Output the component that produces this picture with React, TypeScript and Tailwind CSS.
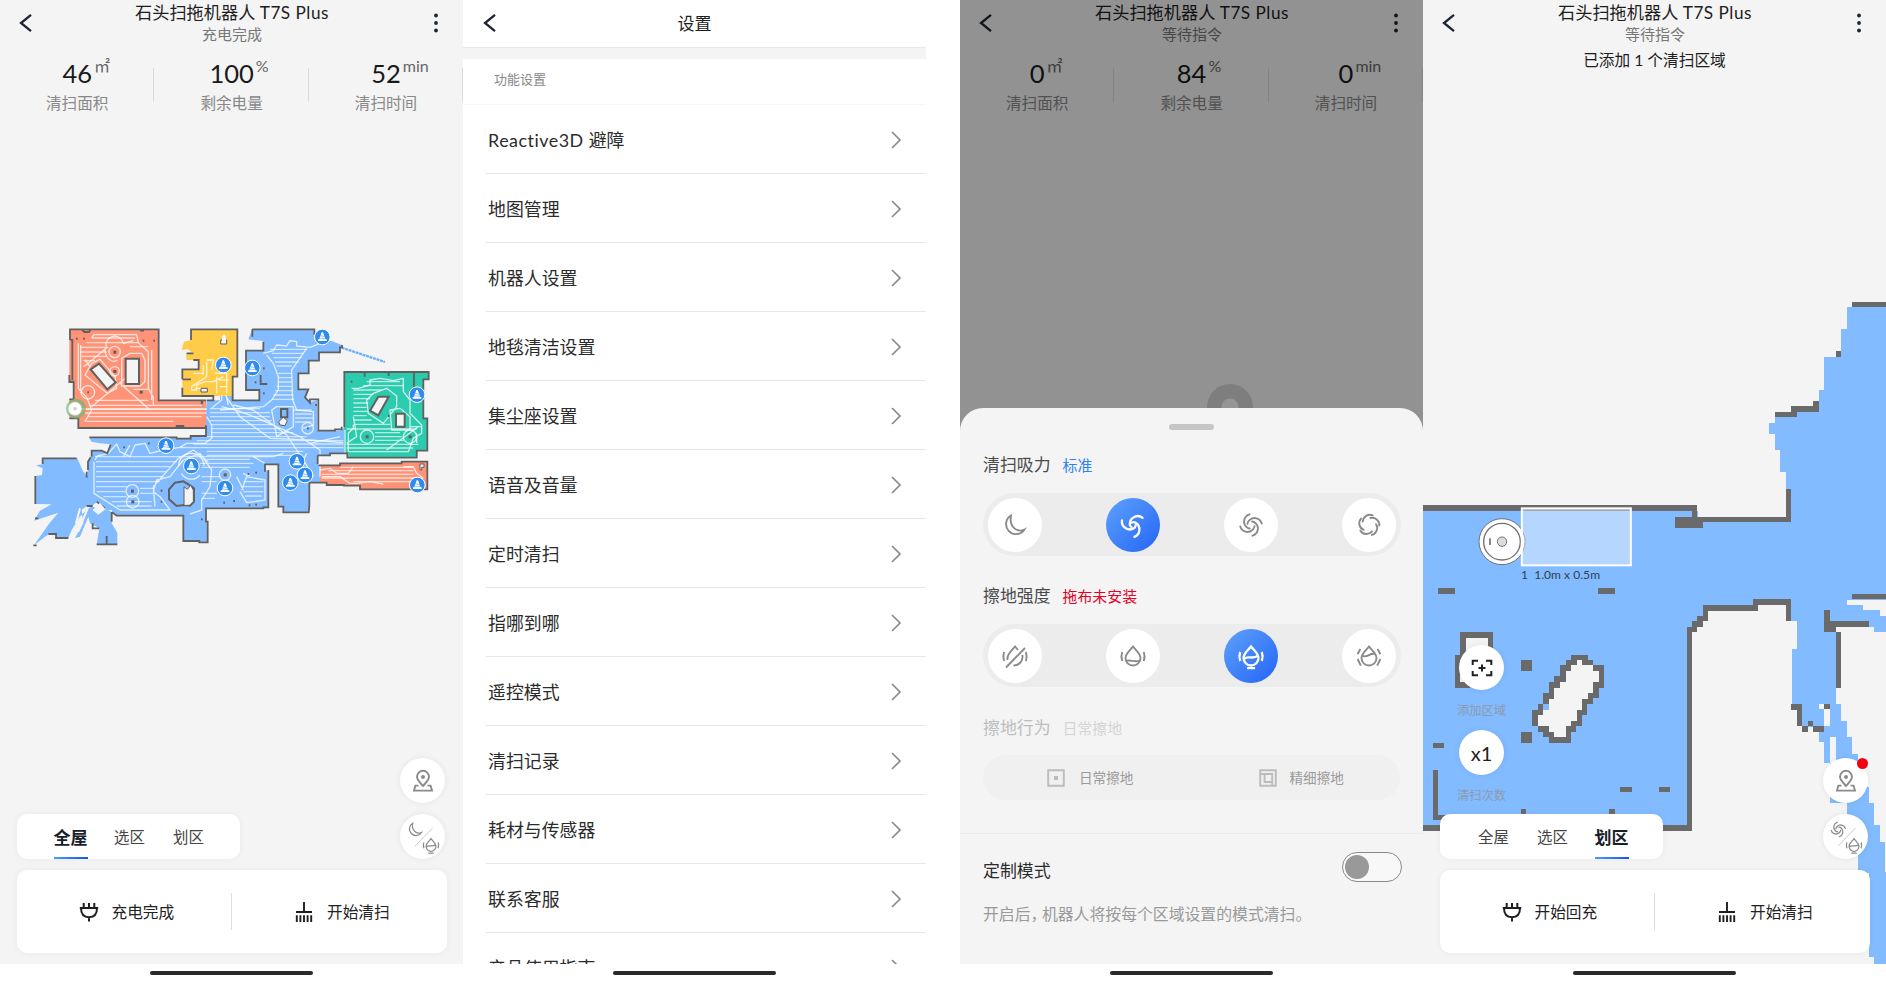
import React from 'react';

const CJK = "font-['Lato','Noto_Sans_CJK_SC',sans-serif]";

/* ---------- icons ---------- */

const DROP = 'M0 -9.5C3 -5.5 7.5 -2.5 7.5 2A7.5 7.5 0 0 1 -7.5 2C-7.5 -2.5 -3 -5.5 0 -9.5Z';
const MOON = 'M-4 -9.5A10 10 0 1 0 9.5 4.5C2 8 -6 2 -4 -9.5Z';
const ARMS: Record<number, string> = {
  3: 'M9.6 -7.2A8 8 0 0 0 -3.3 -1A3.4 3.4 0 0 0 -1.6 2',
  4: 'M10.7 -1.5A7.4 7.4 0 0 0 -1.8 -4.6Q-3.4 -3 -3.5 -1.2',
  5: 'M10.3 0.5A7.2 7.2 0 0 0 1.4 -7',
};

function Icon({ size = 24, children, className = '' }: { size?: number; children: React.ReactNode; className?: string }) {
  return (
    <svg width={size} height={size} viewBox={`${-size / 2} ${-size / 2} ${size} ${size}`} fill="none" stroke="currentColor" strokeWidth={1.9} className={`shrink-0 ${className}`}>
      {children}
    </svg>
  );
}

function Swirl({ arms }: { arms: number }) {
  return (
    <g strokeLinecap="round">
      {Array.from({ length: arms }, (_, i) => (
        <path key={i} d={ARMS[arms]} transform={`rotate(${(360 / arms) * i})`} />
      ))}
    </g>
  );
}

const SideMarks = () => <path d="M-10.8 -4Q-12.4 0.5 -10.8 5M10.8 -4Q12.4 0.5 10.8 5" />;

function DropMedium() {
  return (
    <g>
      <path d={DROP} />
      <path d="M-7 3C-3 -1 2 4 7 -0.5M-4 12.2H4" />
      <SideMarks />
    </g>
  );
}

const Back = () => (
  <Icon size={22} className="text-[#1c2530]">
    <path d="M5 -8.2L-5 0L5 8.2" strokeWidth={2.3} />
  </Icon>
);

const Pin = () => (
  <Icon size={24} className="text-[#8a8a8a]">
    <path d="M0 5C-3 1.5 -6 -1 -6 -4.2A6 6 0 0 1 6 -4.2C6 -1 3 1.5 0 5Z" />
    <circle r="2" cy="-4" fill="currentColor" stroke="none" />
    <path d="M-4.5 4.6H-7.6L-9 9.6H9L7.6 4.6H4.5" />
  </Icon>
);

const Plug = () => (
  <Icon size={22} className="text-[#1f1f1f]">
    <path d="M-9.2 -4H9.2M-8 -4C-8 2 -5 5.2 0 5.2C5 5.2 8 2 8 -4M-5.3 -9V-4M0 -9V-4M5.3 -9V-4M0 5.2V9.5" strokeWidth={2} />
  </Icon>
);

const Broom = () => (
  <Icon size={22} className="text-[#1f1f1f]">
    <path d="M0 -10V-0.5M-8 0H8M-7.2 3.2V10M-3.6 3.2V10M0 3.2V10M3.6 3.2V10M7.2 3.2V10" strokeWidth={1.9} />
  </Icon>
);

/* ---------- shared pieces ---------- */

function Header({ status }: { status: string }) {
  return (
    <header className="flex h-[46px] items-start justify-between pl-[15px] pr-[16px]">
      <div className="pt-[12px]"><Back /></div>
      <div className="pl-[2px] text-center">
        <h1 className="h-[24px] whitespace-nowrap text-[17.2px] leading-[26px] text-[#1d1d1d]">
          石头扫拖机器人 <span className="tracking-[0.5px]">T7S Plus</span>
        </h1>
        <p className="text-[15px] leading-[20px] text-[#777]">{status}</p>
      </div>
      <div className="pt-[12px]">
        <Icon size={22} className="text-[#1c2530]">
          <g fill="currentColor" stroke="none"><circle cy="-7.5" r="1.9" /><circle r="1.9" /><circle cy="7.5" r="1.9" /></g>
        </Icon>
      </div>
    </header>
  );
}

type StatT = { value: string; unit: string; label: string };

function Stats({ items }: { items: StatT[] }) {
  return (
    <div className="flex h-[70px] pt-[13px]">
      {items.map((s, i) => (
        <div key={s.label} className="relative flex w-[154.4px] shrink-0 flex-col items-center">
          <div className="relative h-[32px] text-[25.5px] leading-[28px] text-[#1a1a1a]">
            {s.value}
            <span className="absolute left-full top-[-3px] pl-[2px] text-[16px] leading-[20px] text-[#666]">{s.unit}</span>
          </div>
          <div className="text-[15.6px] leading-[24px] text-[#888]">{s.label}</div>
          {i < 3 && <i className="absolute right-0 top-[9px] h-[34px] w-px bg-black/10" />}
        </div>
      ))}
    </div>
  );
}

const HomeBar = () => (
  <div className="flex h-[18px] shrink-0 justify-center bg-white pt-[6.5px]">
    <i className="h-[4.5px] w-[163px] rounded-full bg-[#2a2a2a]" />
  </div>
);

function Tabs({ active }: { active: number }) {
  return (
    <nav className="flex h-[45px] w-[223px] rounded-[10px] bg-white pl-[24px] shadow-[0_0_6px_rgba(0,0,0,0.05)]">
      {['全屋', '选区', '划区'].map((t, i) => (
        <div key={t} className="relative flex w-[59px] items-center justify-center pt-[3px]">
          <span className={i === active ? 'text-[17px] font-bold text-[#17202b]' : 'text-[15.4px] text-[#444]'}>{t}</span>
          {i === active && <i className="absolute bottom-0 h-[2px] w-[34px] bg-gradient-to-r from-[#4d9bff] to-[#1554ee]" />}
        </div>
      ))}
    </nav>
  );
}

function Actions({ left }: { left: string }) {
  return (
    <div className="mt-[11px] flex h-[83px] w-[430px] items-center rounded-[10px] bg-white text-[15.7px] text-[#222] shadow-[0_0_6px_rgba(0,0,0,0.05)]">
      <div className="flex w-[214px] items-center gap-[12px] pl-[60.5px] pt-[2px]"><Plug /><span>{left}</span></div>
      <i className="h-[37px] w-px bg-[#ddd]" />
      <div className="flex items-center gap-[12px] pl-[61px] pt-[2px]"><Broom /><span>开始清扫</span></div>
    </div>
  );
}

const Fab = ({ children }: { children: React.ReactNode }) => (
  <div className="relative flex h-[45px] w-[45px] items-center justify-center rounded-full bg-white shadow-[0_0_6px_rgba(0,0,0,0.07)]">{children}</div>
);

function Fabs({ mode, alert }: { mode: React.ReactNode; alert?: boolean }) {
  return (
    <div className="flex flex-col gap-[11px] pr-[2px]">
      <Fab>
        <Pin />
        {alert && <i className="absolute right-[0px] top-0 h-[11px] w-[11px] rounded-full bg-[#f30014]" />}
      </Fab>
      <Fab>
        <Icon size={44} className="text-[#8a8a8a]">
          <g transform="translate(-7.7 -7.5) scale(.66)">{mode}</g>
          <path d="M-8 9L9.5 -9" stroke="#ccc" strokeWidth="1" />
          <g transform="translate(8 8) scale(.66)"><DropMedium /></g>
        </Icon>
      </Fab>
    </div>
  );
}

/* ---------- overview map ---------- */

const CONES: [number, number][] = [
  [610, 165], [438, 407], [514, 468], [615, 534], [697, 174], [907, 81], [1191, 254], [831, 454], [855, 495], [811, 518], [1192, 525],
];

const ORANGE_LINES: [number, number, number][] = [
  [215, 345, 84], [200, 355, 98], [182, 265, 112], [182, 260, 126], [185, 260, 139], [190, 225, 152], [225, 385, 271], [210, 545, 286],
  [195, 560, 298], [195, 560, 309], [205, 545, 320], [200, 460, 334], [330, 385, 110], [340, 385, 238],
];
const BLUE_LINES: [number, number, number][] = [
  [570, 720, 296], [570, 750, 308], [570, 750, 320], [570, 755, 332], [572, 760, 344], [574, 780, 356], [574, 820, 368], [540, 860, 380],
  [530, 970, 392], [520, 970, 402], [480, 970, 413], [560, 850, 424], [560, 830, 436], [225, 705, 440], [560, 690, 448], [228, 470, 455],
  [228, 450, 470], [228, 440, 485], [228, 430, 500], [228, 420, 515], [228, 320, 530], [230, 315, 545], [250, 320, 560], [275, 395, 575], [290, 395, 588],
  [360, 400, 535], [360, 400, 550], [540, 700, 460], [545, 690, 472], [545, 600, 500], [545, 590, 515], [545, 590, 550], [545, 585, 565],
  [750, 860, 118], [755, 850, 130], [760, 845, 143], [765, 835, 156], [770, 815, 168], [775, 815, 190], [775, 815, 203], [775, 815, 216], [770, 815, 229],
  [765, 818, 242], [760, 820, 255], [755, 822, 268], [820, 875, 300], [825, 875, 312], [825, 878, 324], [825, 875, 336], [670, 730, 515], [670, 730, 530], [670, 730, 545], [675, 725, 558],
];
const GREEN_LINES: [number, number, number][] = [
  [1040, 1140, 215], [1030, 1150, 227], [1000, 1085, 240], [1000, 1060, 253], [1000, 1050, 266], [1000, 1045, 279], [1000, 1040, 292], [1000, 1045, 304],
  [1000, 1040, 317], [1000, 1055, 330], [1000, 1110, 343], [980, 1190, 357], [1065, 1140, 368], [1065, 1145, 380], [1065, 1150, 391], [980, 1195, 403], [980, 1180, 414],
];
const RED_LINES: [number, number, number][] = [
  [960, 1180, 472], [925, 1180, 482], [905, 1180, 493], [905, 1190, 504], [1000, 1180, 515],
];

const rows = (list: [number, number, number][]) => list.map(([a, b, y]) => `M${a} ${y}H${b}`).join('');

function OverviewMap() {
  return (
    <svg width="420" height="250" viewBox="0 0 1260 750" className="ml-[20px] shrink-0" fill="none">
      <path fill="#82bbff" d="M558 300V378H512V384H470V383H208L214 395L240 400L272 403L265 430L245 422H215V440L205 455L202 500L188 482L172 445H68V463L48 466L68 475L66 495L46 498V582L95 583L60 602L42 632L115 608L88 640L42 706L75 680L88 672H108V684H145L155 660L178 622L200 600L232 575L255 595L275 606V640L292 668V703H230L238 655L210 640L205 620L180 680L165 684L190 640L185 600L200 588L275 600L290 617H490V695H563L558 595H745V485L735 480V462H775V590H790V607H868V518H900V466L893 462V436H930V430H975V350L960 362H891V271L872 276L855 262L865 240H835V190H866V152H897V127H960L966 105L935 93L883 88V58H697L685 88L730 93V122H678V240H718V271H638V256H600V271H560Z" />
      <path fill="#ff9377" d="M148 58H416V271H558V354H175V325H148V268H161V215H148Z" />
      <path fill="#ffcc4a" d="M513 58H652V200H638V258H487V210H513V206H487V178H536V150H500L498 130H520L503 118L485 120L492 95L513 90Z" />
      <path fill="#2bcbae" d="M973 186H1226V208H1210V325H1222V422H1192V443H985V430H973Z" />
      <path fill="#ff9377" d="M900 466L960 466V460H1145V455H1222V538H1020V525H920V518H900Z" />

      <g stroke="#f4f4f4" strokeWidth="6">
        <path d="M180 595L168 640M205 590L175 665M200 655L180 690" />
      </g>
      <path d="M965 113L1095 156" stroke="#6fb0fb" strokeWidth="7" strokeDasharray="9 2" />

      <g stroke="#fff" strokeOpacity=".68" strokeWidth="4.2">
        <path d={rows(ORANGE_LINES)} />
        <path d={rows(GREEN_LINES)} />
        <path d={rows(RED_LINES)} />
      </g>
      <path d={rows(BLUE_LINES)} stroke="#fff" strokeOpacity=".62" strokeWidth="4.2" />
      <g stroke="#fff" strokeOpacity=".75" strokeWidth="4" strokeLinejoin="round">
        <path d="M175 100V235L200 262L215 300L195 335M182 105V250M215 84L222 74H350L355 98L385 125V235L400 262V285M395 120V270M195 150L210 170M190 170L205 160L262 112M330 130H365L375 150V215L360 228H305V145ZM215 160L240 148L285 200L290 235L262 250L195 195ZM215 290L345 180M300 220L390 300M258 110A26 26 0 0 1 310 100L340 92M255 120C258 150 280 160 292 150M175 297H560" />
        <circle cx="284" cy="126" r="17" /><circle cx="204" cy="247" r="20" /><circle cx="284" cy="184" r="14" />
        <path d="M560 150H580L575 180M560 155V200L515 230V240H530V225L555 215H580L610 200M550 165V195M520 190H550M585 190H620V250M590 200V250M598 210H625M525 235H545M600 230H620M605 255V270L575 295M618 255L625 285" />
        <path d="M225 450L232 438L265 430L290 402L300 425L330 440L345 405L375 400L390 430L430 420L480 412L500 400H555L575 385V345L560 320M222 455V550L300 600H450L420 560L400 545L410 510L450 500L490 450L540 430L575 480L570 530L545 570V600L510 612M405 590L400 530L475 445L520 420L565 455M330 405L310 440M620 262L660 320L750 385L870 390L970 398M605 290C700 310 760 350 840 380L900 420V500M640 285L700 300L800 375L850 450L880 500M665 540L680 500L735 510V570L680 578L660 545M735 460L700 440H760L790 430M650 500L670 540" />
        <path d="M730 130L760 122L770 105L800 108L810 92L830 95V108L870 112L900 100L920 90M860 115L815 180L818 270L830 300L880 305V345L850 355M740 135L760 160L775 200V240L755 270L730 290L600 300M770 290H820V350L770 380L755 300Z" />
        <circle cx="337" cy="543" r="19" /><circle cx="338" cy="575" r="19" /><circle cx="615" cy="494" r="17" /><circle cx="863" cy="355" r="17" /><path d="M476 468A38 38 0 0 1 514 430A38 38 0 0 1 552 468M484 490A34 34 0 0 0 540 495M690 495A20 20 0 0 1 670 490" />
        <path d="M995 235H1015L1050 225V210L1080 205L1120 212L1150 205V245L1170 270V310L1190 330L1205 345V370L1180 385L1165 425H985V370L1000 355V345M1060 250L1100 235L1130 258V290L1090 340L1045 310L1040 270ZM1110 300L1140 295L1170 320V360H1115ZM1000 320L1010 380M1195 350L1100 420M1170 350H1205M1190 370V400M1010 380L980 400M975 360V430" />
        <circle cx="1041" cy="380" r="20" /><circle cx="1170" cy="380" r="20" />
        <path d="M900 480L930 475L950 490H985L1000 470M905 500H960L990 520H1010L1050 515L1090 522M1150 470H1180L1190 490L1210 505" />
        <path d="M840 470L860 430M870 400L960 380" />
      </g>

      <g stroke="#606060" strokeWidth="5.4">
        <path d="M161 268V215H148M150 90V58H416V271H545V282L548 271H558M152 90H157V210M148 268H161M148 325H175V354H558V346M185 58L193 66H207L213 58M363 58V62H372M470 354V348H490V354M148 195V216H158" />
        <path d="M208 382H470V386H512V378H558V350M513 90V58H652V200H638V271H718V240H678V122H730V95M638 240V271M487 233V258H580V271H560M487 208V178H536V150H520M487 208H513M500 130H520" />
        <path d="M697 58V80M697 58H883V75M966 105V112H960V127H897V152H866V190H835V238H865L855 262L870 278V268H895V362H945V358H965V350M893 436H930V430H982V443H1190V422H1222V325H1210V208H1226V186H973V352M1182 186V235M1034 186V200M1106 186V198" />
        <path d="M893 462V436M896 466H960V460H1145V455H1222V538H1020V527H972V525H920V518H868V588L866 607H790V590H775V463H735V485M745 480V592H730V595H558V635H563V697H538V693H490V617H290L275 606M275 606V635M230 703H292M260 703V678M238 655H218V640M200 588H218M230 575L255 595M68 462V445H170M46 498V582M85 672H108V684H145M45 625H55M40 706H50M215 440V422H245L262 430L272 404M212 442L204 455V480M200 485V503" />
        <path d="M722 195V222H742" />
      </g>
      <g fill="#f4f4f4" stroke="#606060" strokeWidth="6">
        <path d="M212 178L237 161L287 217L262 238Z" /><path d="M317 146H357V222H317Z" />
        <path d="M1075 260H1106L1075 316L1050 302Z" /><path d="M1128 311H1154V350H1128Z" />
        <path d="M783 297H802V322H783Z" fill="#82bbff" /><path d="M776 335L790 322L802 332L795 347L780 345Z" strokeWidth="3" />
        <path d="M492 585L470 588L447 568V538L465 518L490 514L510 526L522 535V575L510 587Z" fill="#82bbff" />
        <path d="M492 530L502 538L512 526L520 540V575L508 586H492Z" strokeWidth="3" />
        <path d="M602 90H620V102H602Z" strokeWidth="3" /><path d="M543 235H562V246H543Z" strokeWidth="3" />
        <path d="M1200 462H1212V472H1205V480H1200Z" strokeWidth="3" />
      </g>
      <path fill="#f4f4f4" d="M606 98V80L612 72L618 80V98ZM218 600L240 578L256 598L235 614Z" />
      <g fill="#6b5b58">
        {[[284, 126], [284, 184], [363, 246], [337, 543], [338, 575], [1041, 380], [1170, 380], [615, 494]].map(([x, y]) => (
          <rect key={`${x}-${y}`} x={x - 4} y={y - 4} width="9" height="9" />
        ))}
        {[[170, 86], [192, 86], [370, 92], [402, 92], [312, 412], [386, 400], [424, 542], [424, 575], [545, 628], [642, 573], [612, 578], [685, 492], [708, 488], [688, 586], [708, 584], [731, 175], [731, 250], [706, 217], [888, 285], [994, 215], [1106, 318], [863, 355], [204, 247]].map(([x, y]) => (
          <rect key={`${x}-${y}`} x={x - 2} y={y - 3} width="5" height="6" />
        ))}
      </g>
      <circle cx="168" cy="296" r="30" fill="#6cb878" fillOpacity=".65" />
      <circle cx="165" cy="296" r="20" fill="#fff" stroke="#d5d5d5" strokeWidth="2" />
      <circle cx="165" cy="296" r="5" fill="#ccc" />
      {CONES.map(([x, y]) => (
        <g key={`${x}-${y}`} transform={`translate(${x} ${y})`}>
          <circle r="23.5" fill="#2f8cee" stroke="#fff" strokeWidth="3" />
          <path fill="#fff" d="M-2 -14H2L10 8H-10ZM-13 7H13V12H-13Z" />
          <path d="M-6 -4L7 -1M-9 3L9 5" stroke="#2f8cee" strokeWidth="1.6" />
        </g>
      ))}
    </svg>
  );
}

/* ---------- zone map ---------- */

function ZoneMap() {
  return (
    <svg width="463" height="964" viewBox="9 -840 1389 2892" className="absolute left-0 top-0" preserveAspectRatio="none">
      <g shapeRendering="crispEdges">
        <path fill="#82bbff" d="M1398 80H1281V148H1264V231H1213V330H1197V396H1065V430H1047V462H1065V511H1081V577H1098V727H833V693H9V1640H800V1048H815V1024H833V1008H850V992H1015V968H1113V1023H1130V1108H1115V1273H1147V1350H1180V1355H1197V1387H1213V1450H1230V1570H1280V1670H1313V1780H1346V2032H1362V2052H1398V1775H1395V1686H1379V1636H1362V1570H1346V1520H1313V1423H1297V1372H1280V1323H1264V1273H1247V1040H1362V1057H1398Z" />
        <g transform="translate(0 840)">
          <path fill="#f4f4f4" d="M1281 119H1398V167H1379V151H1329V135H1281ZM1230 532H1247V610H1230ZM1213 447H1230V497H1213ZM1197 433H1213V447H1197ZM137 234H204V370H121V300H137ZM453 300H487V316H520V333H537V366H520V400H503V416H487V449H470V482H453V498H437V532H403V515H387V498H354V466H370V449H387V416H403V383H420V366H437V333H453ZM1147 500H1180V515H1147Z" />
          <g fill="#6a6a6a">
            <path d="M54 85H104V102H54ZM535 85H584V102H535ZM302 300H336V333H302ZM302 515H336V548H302ZM38 548H71V564H38ZM600 680H635V696H600ZM717 680H750V696H717ZM302 747H319V780H302ZM567 747H584V780H567ZM38 630H54V766H88V780H38Z" />
            <path d="M9 796H800V201H815V184H832V168H849V135H999V118H1114V184H1098V135H1015V152H865V184H849V201H832V217H816V812H9Z" />
            <path d="M1297 102H1398V118H1297ZM1213 151H1229V184H1346V201H1247V217H1213ZM1247 217H1263V383H1247ZM1114 433H1147V498H1131V449H1114ZM1213 433H1230V447H1213ZM1163 483H1180V498H1163ZM1147 498H1163V515H1147ZM1180 498H1213V515H1180Z" />
            <path d="M121 217H220V300H204V234H137V300H121V383H104V284H121ZM104 366H150V383H104Z" />
            <path fillRule="evenodd" d="M453 284H503V300H519V316H551V383H536V414H519V433H502V465H486V498H469V515H453V548H386V532H370V515H354V498H336V449H354V433H370V400H386V366H403V349H420V316H437V300H453ZM470 300V316H453V333H437V366H420V383H403V416H387V433H370V466H354V498H387V515H403V532H437V498H453V482H470V449H487V416H503V400H520V366H537V333H520V316H487V300Z" />
          </g>
        </g>
        <path fill="#6a6a6a" d="M9 676H832V710H1098V628H1114V727H849V744H766V710H816V693H9ZM1297 65H1398V82H1297ZM1247 214H1263V231H1247ZM1065 396H1114V379H1180V363H1196V396H1131V412H1065Z" />
      </g>
      <g fill="#fff" stroke="#6f7276">
        <circle cx="246" cy="785" r="69" strokeWidth="3" />
        <circle cx="246" cy="785" r="55" strokeWidth="4" />
        <circle cx="246" cy="785" r="14" fill="#ddd" strokeWidth="3" />
        <path d="M210 775V795" strokeWidth="5" />
      </g>
      <rect x="305.5" y="685" width="327" height="171" fill="#fff" fillOpacity=".4" stroke="#fff" strokeWidth="6" />
      <text x="303" y="896" fontSize="36" fill="#33404e" textLength="237" xmlSpace="preserve">1  1.0m x 0.5m</text>
    </svg>
  );
}

/* ---------- screens ---------- */

function OverviewScreen() {
  return (
    <section className="flex w-[463px] shrink-0 flex-col">
      <div className="flex h-[964px] flex-col bg-[#f4f4f4]">
        <Header status="充电完成" />
        <Stats items={[{ value: '46', unit: '㎡', label: '清扫面积' }, { value: '100', unit: '%', label: '剩余电量' }, { value: '52', unit: 'min', label: '清扫时间' }]} />
        <div className="flex flex-1 flex-col pt-[194px]"><OverviewMap /></div>
        <div className="flex flex-col pb-[11px] pl-[17px]">
          <div className="flex w-[430px] items-end justify-between">
            <Tabs active={0} />
            <Fabs mode={<path d={MOON} />} />
          </div>
          <Actions left="充电完成" />
        </div>
      </div>
      <HomeBar />
    </section>
  );
}

const SETTINGS: { latin?: string; text: string }[] = [
  { latin: 'Reactive3D', text: '避障' },
  ...['地图管理', '机器人设置', '地毯清洁设置', '集尘座设置', '语音及音量', '定时清扫', '指哪到哪', '遥控模式', '清扫记录', '耗材与传感器', '联系客服', '产品使用指南'].map((text) => ({ text })),
];

function SettingsScreen() {
  return (
    <section className="flex w-[463px] shrink-0 flex-col bg-white">
      <div className="flex h-[964px] flex-col overflow-hidden">
        <header className="grid h-[48px] shrink-0 grid-cols-[40px_1fr_40px] items-center border-b border-[#e8e8e8] pl-[15px] pr-[15px]">
          <div className="pb-[1px] pl-[1px]"><Back /></div>
          <h1 className="text-center text-[17px] leading-[24px] text-[#1d1d1d]">设置</h1>
        </header>
        <div className="h-[11px] shrink-0 bg-[#f4f4f4]" />
        <div className="flex h-[46px] shrink-0 items-center border-b border-[#f7f7f7] pb-[4px] pl-[31px] text-[13px] text-[#888]">功能设置</div>
        <ul className="ml-[23px]">
          {SETTINGS.map((s) => (
            <li key={s.text} className="flex h-[69px] items-center justify-between border-b border-[#e6e6e6] pl-[2px] pr-[21px] pt-[2px] text-[17.9px] text-[#2b2b2b]">
              <span>
                {s.latin && <span className="mr-[5px] tracking-[0.5px]">{s.latin}</span>}
                {s.text}
              </span>
              <Icon size={18} className="text-[#8a8a8a]"><path d="M-4 -8L4 0L-4 8" strokeWidth={1.7} /></Icon>
            </li>
          ))}
        </ul>
      </div>
      <HomeBar />
    </section>
  );
}

function ModeTrack({ icons, active }: { icons: React.ReactNode[]; active: number }) {
  return (
    <div className="ml-[23px] mt-[15px] flex h-[63px] w-[418px] items-center justify-between rounded-full bg-[#ececec] px-[4.5px]">
      {icons.map((ic, i) => (
        <div key={i} className={`flex h-[54px] w-[54px] items-center justify-center rounded-full ${i === active ? 'bg-gradient-to-br from-[#5fa0fb] to-[#2563f5] text-white' : 'bg-white text-[#8a8a8a]'}`}>
          <Icon size={28}>{ic}</Icon>
        </div>
      ))}
    </div>
  );
}

function ModeLabel({ title, value, tone, muted, className }: { title: string; value: string; tone: string; muted?: boolean; className: string }) {
  return (
    <div className={`flex h-[24px] items-center gap-[12px] pl-[23px] ${className}`}>
      <span className={`text-[16.9px] ${muted ? 'text-[#bdbdbd]' : 'text-[#4a4a4a]'}`}>{title}</span>
      <span className={`text-[14.9px] ${tone}`}>{value}</span>
    </div>
  );
}

function ModeScreen() {
  return (
    <section className="flex w-[463px] shrink-0 flex-col">
      <div className="flex h-[964px] flex-col overflow-hidden bg-[#f4f4f4]">
        <div className="relative h-[408px] shrink-0">
          <Header status="等待指令" />
          <Stats items={[{ value: '0', unit: '㎡', label: '清扫面积' }, { value: '84', unit: '%', label: '剩余电量' }, { value: '0', unit: 'min', label: '清扫时间' }]} />
          <svg width="46" height="46" viewBox="0 0 46 46" className="absolute left-[247px] top-[384px]">
            <circle cx="23" cy="23" r="23" fill="#d2d2d2" /><circle cx="23" cy="23" r="8.5" fill="#f8f8f8" />
          </svg>
          <div className="absolute inset-x-0 top-0 h-[440px] bg-black/40" />
        </div>
        <div className="relative flex flex-1 flex-col rounded-t-[23px] bg-[#f4f4f4] pt-[16px]">
          <i className="h-[6px] w-[45px] self-center rounded-full bg-[#c6c6c6]" />
          <ModeLabel className="mt-[23px]" title="清扫吸力" value="标准" tone="text-[#2b84f5]" />
          <div className="mt-px">
            <ModeTrack active={1} icons={[<path d={MOON} />, <g strokeWidth="2.3"><Swirl arms={3} /></g>, <Swirl arms={4} />, <Swirl arms={5} />]} />
          </div>
          <ModeLabel className="mt-[28px]" title="擦地强度" value="拖布未安装" tone="text-[#e60027]" />
          <div className="mt-px">
            <ModeTrack
              active={2}
              icons={[
                <g><path d="M-7.5 4C-8.5 -2 -3 -5.5 0 -9.5L3 -6M7.3 -1C8.5 5 4 9.5 -1.5 9.5M-9 11.5L10 -8" /><SideMarks /></g>,
                <g><path d={DROP} /><path d="M-7.2 5C-3 3 2 7 7.2 4.5" /><SideMarks /></g>,
                <g strokeWidth="2.3"><DropMedium /></g>,
                <g><path d={DROP} /><path d="M-7 -0.5C-2 3 1 -4 6 -2M-8.6 -7L-11.4 -1.8M8.6 -7L11.4 -1.8M-11.4 3L-8.2 9.6M11.4 3L8.2 9.6" /></g>,
              ]}
            />
          </div>
          <ModeLabel className="mt-[29px]" title="擦地行为" value="日常擦地" tone="text-[#d4d4d4]" muted />
          <div className="mx-[23px] mt-[15px] flex h-[45px] items-center rounded-full bg-[#f0f0f0] pt-[1px] text-[13.6px] text-[#9a9a9a]">
            <div className="flex w-1/2 items-center gap-[14px] pl-[64px]">
              <Icon size={18} className="text-[#bcbcbc]"><path d="M-7.8 -7.8H7.8V7.8H-7.8Z" /><path d="M-2 -2H2V2H-2Z" fill="currentColor" stroke="none" /></Icon>
              <span>日常擦地</span>
            </div>
            <div className="flex w-1/2 items-center gap-[13px] pl-[67px]">
              <Icon size={18} className="text-[#bcbcbc]"><path d="M-7.8 -7.8H7.8V7.8H-7.8ZM-7.8 -4H4.2V4H-3.4V-4M4.2 4V7.8" /></Icon>
              <span>精细擦地</span>
            </div>
          </div>
          <div className="mt-[33px] h-px bg-[#ebebeb]" />
          <div className="mt-[18px] flex h-[30px] items-center justify-between pl-[23px] pr-[21px]">
            <span className="pt-[7px] text-[16.9px] text-[#2b2b2b]">定制模式</span>
            <div className="flex h-[30px] w-[60px] items-center rounded-full border border-[#8a8a8a] bg-[#f8f8f8] pl-[2px]"><i className="h-[24px] w-[24px] rounded-full bg-[#999]" /></div>
          </div>
          <p className="mt-[20px] pl-[23px] text-[15.85px] leading-[24px] text-[#999]">开启后<span className="tracking-[-4.5px]">，</span>机器人将按每个区域设置的模式清扫。</p>
        </div>
      </div>
      <HomeBar />
    </section>
  );
}

function ZoneScreen() {
  return (
    <section className="flex w-[463px] shrink-0 flex-col">
      <div className="relative h-[964px] overflow-hidden bg-[#f4f4f4]">
        <ZoneMap />
        <div className="relative flex h-full flex-col">
          <Header status="等待指令" />
          <p className="flex-1 pt-[1px] text-center text-[15.7px] leading-[26px] text-[#1d1d1d]">已添加 1 个清扫区域</p>
          <div className="flex flex-col pb-[11px] pl-[17px]">
            <div className="flex w-[430px] items-end justify-between">
              <div className="flex flex-col">
                <div className="mb-[8px] flex w-[83px] flex-col items-center text-[12.3px] leading-[20px] text-[#8c9bad]">
                  <Fab>
                    <Icon size={24} className="text-[#222]"><path d="M-9.3 -3V-7.3H-4M4 -7.3H9.3V-3M9.3 3V7.3H4M-4 7.3H-9.3V3M-3.5 0H3.5M0 -3.5V3.5" strokeWidth={2} /></Icon>
                  </Fab>
                  <span className="mt-[11px]">添加区域</span>
                  <div className="mt-[9px]"><Fab><span className="text-[20px] text-[#222]">x1</span></Fab></div>
                  <span className="mt-[11px]">清扫次数</span>
                </div>
                <Tabs active={2} />
              </div>
              <Fabs alert mode={<Swirl arms={4} />} />
            </div>
            <Actions left="开始回充" />
          </div>
        </div>
      </div>
      <HomeBar />
    </section>
  );
}

export default function App() {
  return (
    <main className={`flex h-[982px] w-[1886px] overflow-hidden bg-white ${CJK}`}>
      <OverviewScreen />
      <SettingsScreen />
      <div className="w-[34px] shrink-0" />
      <ModeScreen />
      <ZoneScreen />
    </main>
  );
}
